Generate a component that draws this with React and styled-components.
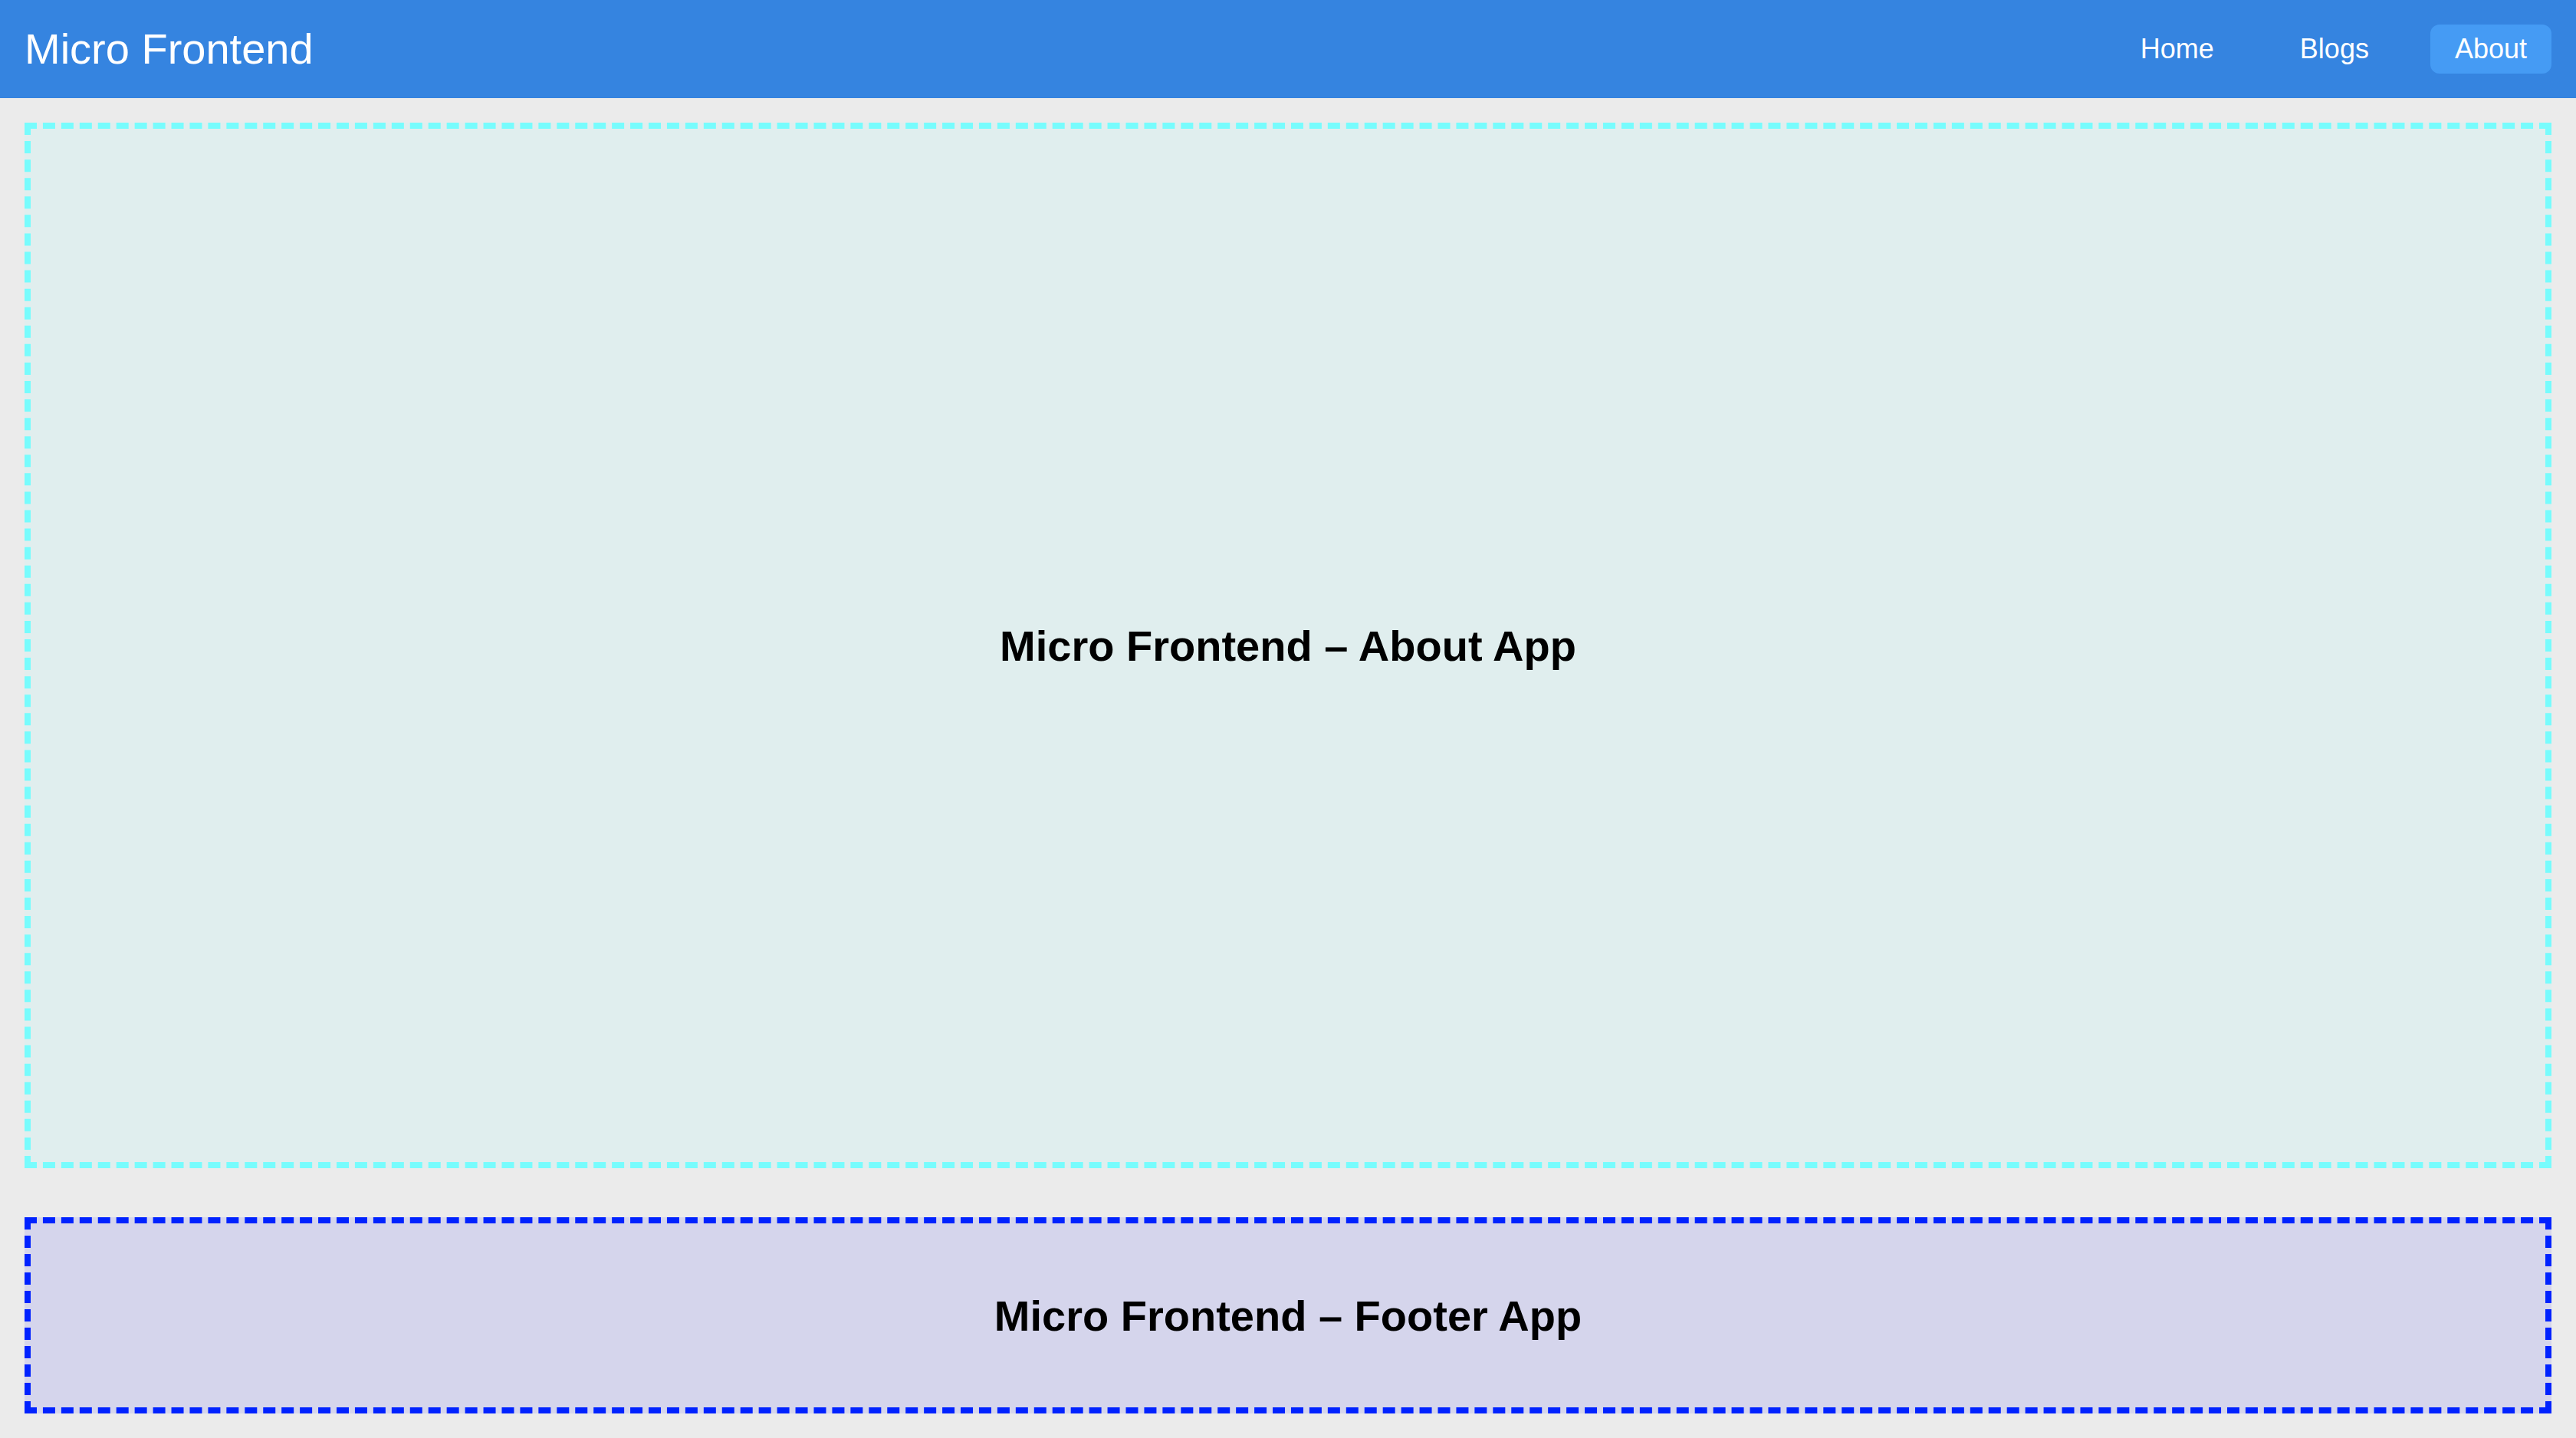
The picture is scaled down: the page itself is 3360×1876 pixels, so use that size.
import React from 'react';
import styled, { createGlobalStyle } from 'styled-components';

const GlobalStyle = createGlobalStyle`
    * { box-sizing: border-box; }
    html, body {
        margin: 0;
        padding: 0;
        background: #ebebeb;
        font-family: "Liberation Sans", Arial, Helvetica, sans-serif;
    }
`;

const Page = styled.div`
    height: 100vh;
    display: flex;
    flex-direction: column;
`;

const Header = styled.header`
    height: 128px;
    flex-shrink: 0;
    background: #3584e0;
    display: flex;
    align-items: center;
    justify-content: space-between;
    padding: 0 32px;
`;

const Brand = styled.div`
    color: #fff;
    font-size: 56px;
    line-height: 1;
`;

const Nav = styled.nav`
    display: flex;
    align-items: center;
    gap: 48px;
`;

const NavLink = styled.a`
    height: 64px;
    display: flex;
    align-items: center;
    padding: 0 32px;
    border-radius: 12px;
    font-size: 36px;
    color: #fff;
    text-decoration: none;
    background: ${props => (props.active ? '#459bf4' : 'transparent')};
`;

const Main = styled.main`
    flex: 1;
    display: flex;
    flex-direction: column;
    gap: 64px;
    padding: 32px;
    min-height: 0;
`;

const AppBox = styled.section`
    flex: ${props => (props.grow ? 1 : 'none')};
    height: ${props => (props.grow ? 'auto' : '256px')};
    display: flex;
    align-items: center;
    justify-content: center;
    border: 8px dashed ${props => props.border};
    background: ${props => props.bg};
`;

const AppTitle = styled.h1`
    margin: 0;
    font-size: 56px;
    font-weight: bold;
    color: #000;
`;

const App = () => {
    return (
        <Page>
            <GlobalStyle />
            <Header>
                <Brand>Micro Frontend</Brand>
                <Nav>
                    <NavLink href="#">Home</NavLink>
                    <NavLink href="#">Blogs</NavLink>
                    <NavLink href="#" active>About</NavLink>
                </Nav>
            </Header>
            <Main>
                <AppBox grow border="#77fcfd" bg="#e0eeee">
                    <AppTitle>Micro Frontend – About App</AppTitle>
                </AppBox>
                <AppBox border="#0022ff" bg="#d5d5ec">
                    <AppTitle>Micro Frontend – Footer App</AppTitle>
                </AppBox>
            </Main>
        </Page>
    );
};

export default App;
